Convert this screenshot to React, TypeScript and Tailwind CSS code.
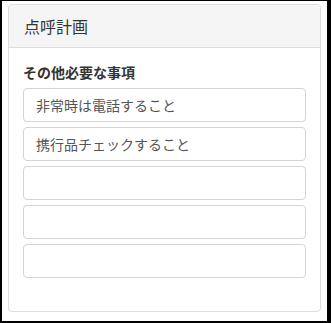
const items = ["非常時は電話すること", "携行品チェックすること", "", "", ""];

const font = "font-['Noto_Sans_CJK_JP','Noto_Sans',sans-serif]";

export default function App() {
  return (
    <div className={`w-[331px] h-[323px] bg-white border-black border-l-2 border-t border-r-[4px] border-b-2 pl-[6px] pt-[3px] pr-[6px] ${font}`}>
      <div className="h-[308px] border border-[#dddddd] rounded-[4px] flex flex-col">
        <div className="h-[43px] bg-[#f5f5f5] border-b border-[#dddddd] rounded-t-[4px] px-[15px] flex items-center">
          <h2 className="text-[16px] text-[#333333] leading-none">点呼計画</h2>
        </div>
        <div className="pl-[14px] pr-[14px] pt-[14px]">
          <label className="block text-[14px] font-bold text-[#333333] leading-[20px] mb-[6px]">
            その他必要な事項
          </label>
          <div className="flex flex-col gap-[5px]">
            {items.map((v, i) => (
              <input
                key={i}
                readOnly
                value={v}
                className={`h-[34px] w-full border border-[#d4d4d4] rounded-[4px] px-[12px] text-[14px] text-[#555555] outline-none ${font}`}
              />
            ))}
          </div>
        </div>
      </div>
    </div>
  );
}
